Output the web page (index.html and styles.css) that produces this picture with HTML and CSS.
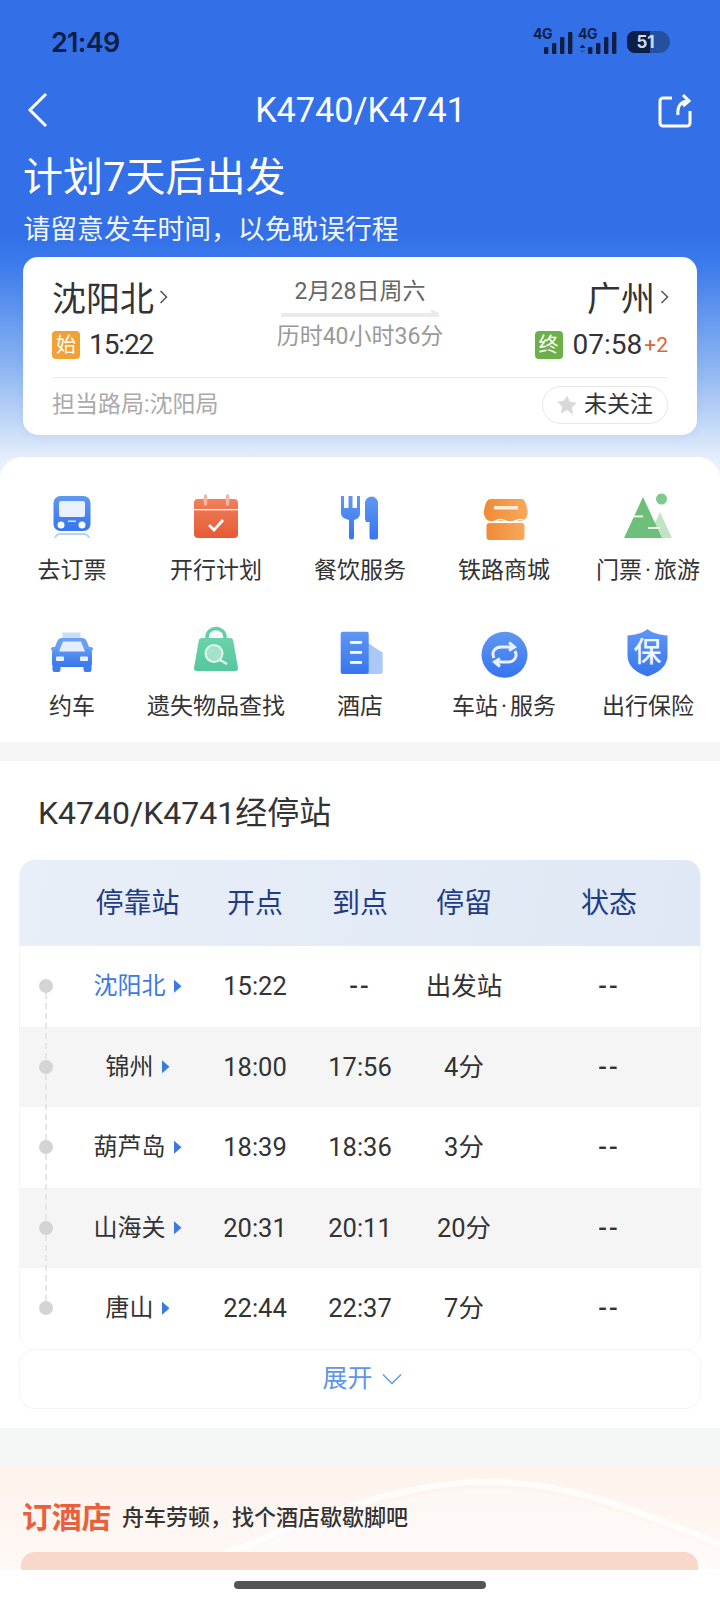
FILE: index.html
```html
<!DOCTYPE html>
<html lang="zh-CN">
<head>
<meta charset="utf-8">
<title>K4740/K4741</title>
<link rel="stylesheet" href="styles.css">
</head>
<body>
<svg class="defs" width="0" height="0" aria-hidden="true">
  <defs>
    <linearGradient id="gb" x1="0" y1="0" x2="0" y2="1"><stop offset="0" stop-color="#5f97f2"/><stop offset="1" stop-color="#3675ee"/></linearGradient>
    <linearGradient id="gr" x1="0" y1="0" x2="0" y2="1"><stop offset="0" stop-color="#f0805c"/><stop offset="1" stop-color="#e65a35"/></linearGradient>
    <linearGradient id="go" x1="0" y1="0" x2="1" y2="0"><stop offset="0" stop-color="#f08a36"/><stop offset="1" stop-color="#f7a95c"/></linearGradient>
    <linearGradient id="gg" x1="0" y1="0" x2="0" y2="1"><stop offset="0" stop-color="#6fbd75"/><stop offset="1" stop-color="#6cc07c"/></linearGradient>
    <linearGradient id="gm" x1="0" y1="0" x2="0" y2="1"><stop offset="0" stop-color="#6ad2ab"/><stop offset="1" stop-color="#55c79e"/></linearGradient>
  </defs>
</svg>
<main class="page">
  <div class="top">
    <div class="status">
      <span class="clock">21:49</span>
      <div class="status-icons">
        <svg class="signal" width="88" height="34" viewBox="-2 -6 88 34">
          <text class="net" x="0" y="11">4G</text>
          <rect x="11" y="19" width="4.400" height="7" rx="1"/><rect x="19" y="15" width="4.400" height="11" rx="1"/><rect x="27" y="9" width="4.400" height="17" rx="1"/><rect x="35" y="4" width="4.400" height="22" rx="1"/>
          <text class="net" x="45" y="11">4G</text>
          <path d="M46.500 20l3-3.500 3 3.500z"/><path class="down" d="M46.500 22h6l-3 3.500z"/>
          <rect x="55" y="19" width="4.400" height="7" rx="1"/><rect x="63" y="15" width="4.400" height="11" rx="1"/><rect x="71" y="9" width="4.400" height="17" rx="1"/><rect x="79" y="4" width="4.400" height="22" rx="1"/>
        </svg>
        <div class="battery"><div class="battery-fill"></div><span class="battery-num">51</span></div>
      </div>
    </div>
    <div class="nav">
      <svg class="nav-icon" width="32" height="36" viewBox="0 0 32 36"><path d="M20 2L4 18l16 16" fill="none" stroke="#fff" stroke-width="3"/></svg>
      <div class="nav-title">K4740/K4741</div>
      <svg class="nav-icon nav-share" width="34" height="36" viewBox="0 0 34 36"><path d="M14 6H5a3 3 0 0 0-3 3v22a3 3 0 0 0 3 3h24a3 3 0 0 0 3-3V19M20 23c-1-9 3-14 11-14M25 3l6 6-6 5" fill="none" stroke="#fff" stroke-width="3"/></svg>
    </div>
    <h1 class="headline">计划7天后出发</h1>
    <p class="subline">请留意发车时间，以免耽误行程</p>
    <section class="trip">
      <div class="trip-main">
        <div class="stop">
          <div class="stop-name">沈阳北<svg class="chev" width="10" height="18" viewBox="0 0 10 18"><path d="M1.500 3l6 6-6 6" fill="none" stroke="#555" stroke-width="1.500"/></svg></div>
          <div class="stop-time"><span class="tag tag-start">始</span><span class="time-narrow">15:22</span></div>
        </div>
        <div class="mid">
          <div class="mid-date">2月28日周六</div>
          <div class="mid-arrow"></div>
          <div class="mid-dur">历时40小时36分</div>
        </div>
        <div class="stop stop-end">
          <div class="stop-name">广州<svg class="chev chev-end" width="10" height="18" viewBox="0 0 10 18"><path d="M1.500 3l6 6-6 6" fill="none" stroke="#555" stroke-width="1.500"/></svg></div>
          <div class="stop-time"><span class="tag tag-end">终</span><span>07:58</span><span class="plus">+2</span></div>
        </div>
      </div>
      <div class="trip-foot">
        <span class="bureau">担当路局:沈阳局</span>
        <span class="follow"><svg width="20" height="20" viewBox="0 0 20 20"><path d="M10 .5l3 6.300 6.800.9-5 4.800 1.300 6.900L10 15.100l-6.100 3.300 1.300-6.900-5-4.800 6.800-.9z" fill="#d8d8d8"/></svg>未关注</span>
      </div>
    </section>
    <section class="services">
      <div class="svc">
        <svg class="ico" viewBox="0 0 48 48"><rect x="5.500" y="2" width="37" height="35" rx="7" fill="url(#gb)"/><rect x="11" y="7" width="26" height="16" rx="2" fill="#e9f1fd"/><circle cx="13" cy="31" r="3.500" fill="#fff"/><circle cx="34" cy="31" r="3.500" fill="#fff"/><rect x="20" y="26.500" width="8" height="1.500" fill="#cfe0fa"/><path d="M7 44c1-3 3-4 5-4h24c2 0 4 1 5 4" fill="none" stroke="#b8d1f8" stroke-width="2"/></svg>
        <span>去订票</span>
      </div>
      <div class="svc">
        <svg class="ico" viewBox="0 0 48 48"><rect x="2" y="5" width="44" height="39" rx="4" fill="url(#gr)"/><rect x="2" y="15" width="44" height="1.300" fill="#fff"/><path d="M13.500 2v8M35.500 2v8" stroke="#f5b7a2" stroke-width="3.500" stroke-linecap="round"/><path d="M17 31l5 5 9-10" fill="none" stroke="#fff" stroke-width="2.800"/></svg>
        <span>开行计划</span>
      </div>
      <div class="svc">
        <svg class="ico" viewBox="0 0 48 48"><path d="M5 2h3v12h4.500V2h4v12H21V2h3v17c0 4-2.500 6-6 7v17a2.500 2.500 0 0 1-5 0V26c-4-1-8-3-8-7z" fill="url(#gb)"/><path d="M29 9a6.500 6.500 0 0 1 13 0v34a2.500 2.500 0 0 1-2.500 2.500h-3.500a2.500 2.500 0 0 1-2.500-2.500V28H30l-1-3z" fill="url(#gb)"/></svg>
        <span>餐饮服务</span>
      </div>
      <div class="svc">
        <svg class="ico" viewBox="0 0 48 48"><path d="M11 5h30c3 0 4 2 5 5l1.500 6c1 5-2 11-6 11H10c-4 0-7-6-6-11l1.500-6c1-3 2.500-5 5.500-5z" fill="url(#go)"/><rect x="6.500" y="29" width="38" height="17" rx="3" fill="url(#go)"/><rect x="14" y="12" width="24" height="3.500" fill="#fbeadb"/><path d="M6 27q4.800 3 9.700 0t9.700 0 9.700 0 9.700 0" fill="none" stroke="#fff" stroke-width="1.500"/></svg>
        <span>铁路商城</span>
      </div>
      <div class="svc">
        <svg class="ico" viewBox="0 0 48 48"><circle cx="37.500" cy="5" r="5.500" fill="#80c98d"/><path d="M36 18l12 26H24z" fill="#c2e4c3"/><path d="M19 3l19 41H0z" fill="url(#gg)"/><rect x="8" y="21.500" width="11" height="1.800" fill="#fff"/><rect x="24" y="33" width="12" height="1.800" fill="#fff"/></svg>
        <span>门票<i class="sep">·</i>旅游</span>
      </div>
      <div class="svc svc-low">
        <svg class="ico" viewBox="0 0 48 48"><rect x="14.500" y="5.500" width="18" height="6" fill="#c8dbf9"/><path d="M14 11h20a5 5 0 0 1 4.600 3l3.400 8H6l3.400-8A5 5 0 0 1 14 11z" fill="#6aa0f3"/><rect x="3" y="20" width="42" height="4" rx="2" fill="#6aa0f3"/><rect x="4" y="22" width="40" height="18" rx="4" fill="url(#gb)"/><rect x="4.500" y="36" width="8" height="9" rx="2" fill="#3f7dee"/><rect x="35.500" y="36" width="8" height="9" rx="2" fill="#3f7dee"/><path d="M15 14.500h18l4 10H11z" fill="#e5ecfb"/><rect x="8" y="29.500" width="8" height="4.500" rx="1" fill="#eaf1fd"/><rect x="32" y="29.500" width="8" height="4.500" rx="1" fill="#eaf1fd"/></svg>
        <span>约车</span>
      </div>
      <div class="svc svc-low">
        <svg class="ico" viewBox="0 0 48 48"><path d="M15 13V10a9 8.500 0 0 1 18 0v3" fill="none" stroke="#62cfa6" stroke-width="3.500"/><path d="M10 11h28c2 0 3 1 3.300 3L46 41c.2 2-1 3-3 3H5c-2 0-3.200-1-3-3l4.700-27c.3-2 1.300-3 3.300-3z" fill="url(#gm)"/><circle cx="22" cy="26.500" r="8.500" fill="#a5e2cb" stroke="#e1f6ee" stroke-width="2"/><path d="M28 33l7 4" stroke="#e1f6ee" stroke-width="2.500"/></svg>
        <span>遗失物品查找</span>
      </div>
      <div class="svc svc-low">
        <svg class="ico" viewBox="0 0 48 48"><path d="M32 16l12 8a3 3 0 0 1 2.700 3v17a3 3 0 0 1-3 3H32z" fill="#aac9f6"/><rect x="4.700" y="4.700" width="28" height="42.300" rx="2" fill="url(#gb)"/><rect x="14" y="14" width="12" height="2.800" fill="#fff"/><rect x="14" y="24" width="12" height="2.800" fill="#fff"/><rect x="14" y="34" width="12" height="2.800" fill="#fff"/></svg>
        <span>酒店</span>
      </div>
      <div class="svc svc-low">
        <svg class="ico" viewBox="0 0 48 48"><circle cx="24.500" cy="27.700" r="23" fill="url(#gb)"/><path d="M14 31c-3-6 1-11 7-11h13M29 15.500l5.500 4.500-5.500 3.500M35 24c3 6-1 11-7 11H16M20 39.500L14.500 35l5.500-3.500" fill="none" stroke="#e9f1fd" stroke-width="3"/></svg>
        <span>车站<i class="sep">·</i>服务</span>
      </div>
      <div class="svc svc-low">
        <svg class="ico" viewBox="0 0 48 48"><path d="M23.500 2c5 4 12 6 20 6.500v20c0 10-8 17-20 21-12-4-20-11-20-21v-20c8-.5 15-2.500 20-6.500z" fill="url(#gb)"/><text class="shield-text" x="23.500" y="35" text-anchor="middle">保</text></svg>
        <span>出行保险</span>
      </div>
    </section>
  </div>

  <section class="stops">
    <h2 class="stops-title">K4740/K4741经停站</h2>
    <div class="table">
      <div class="thead">
        <span></span><span>停靠站</span><span>开点</span><span>到点</span><span>停留</span><span>状态</span>
      </div>
      <div class="tr"><span class="dot"></span><span class="st st-first">沈阳北<i class="tri"></i></span><span>15:22</span><span class="dash">--</span><span>出发站</span><span class="dash">--</span></div>
      <div class="tr alt"><span class="dot"></span><span class="st">锦州<i class="tri"></i></span><span>18:00</span><span>17:56</span><span>4分</span><span class="dash">--</span></div>
      <div class="tr"><span class="dot"></span><span class="st">葫芦岛<i class="tri"></i></span><span>18:39</span><span>18:36</span><span>3分</span><span class="dash">--</span></div>
      <div class="tr alt"><span class="dot"></span><span class="st">山海关<i class="tri"></i></span><span>20:31</span><span>20:11</span><span>20分</span><span class="dash">--</span></div>
      <div class="tr"><span class="dot dot-last"></span><span class="st">唐山<i class="tri"></i></span><span>22:44</span><span>22:37</span><span>7分</span><span class="dash">--</span></div>
    </div>
    <div class="expand">展开<svg width="20" height="12" viewBox="0 0 20 12"><path d="M1 1.500l9 9 9-9" fill="none" stroke="#5b95ec" stroke-width="1.400"/></svg></div>
  </section>

  <section class="hotel">
    <svg class="hotel-wave" width="720" height="110" viewBox="0 0 720 110" preserveAspectRatio="none"><path d="M170 110C300 60 400 12 500 17c90 4 160 40 220 62" fill="none" stroke="#fff" stroke-width="6" opacity=".8"/><path d="M170 110C300 65 400 20 500 24c90 4 160 40 220 62v24z" fill="#fff" opacity=".35"/></svg>
    <div class="hotel-head"><span class="hotel-title">订酒店</span><span class="hotel-sub">舟车劳顿，找个酒店歇歇脚吧</span></div>
    <div class="hotel-card"></div>
  </section>
  <div class="home"><span class="home-bar"></span></div>
</main>
</body>
</html>
```

FILE: styles.css
```css
* { box-sizing: border-box; }
html, body { margin: 0; padding: 0; }
body {
  width: 720px;
  height: 1600px;
  overflow: hidden;
  background: #f5f6f6;
  font-family: Roboto, "Noto Sans CJK SC", sans-serif;
  color: #333;
}
.defs { position: absolute; }
.page { position: relative; width: 720px; height: 1600px; overflow: hidden; }

.top {
  background: linear-gradient(#3370e8 0, #3370e8 235px, #3b7aec 262px, #86b0f1 360px, #c9dcf8 430px, #e8f0fc 462px, #fff 500px);
}
.status { height: 84px; padding: 0 50px 0 51px; display: flex; align-items: center; justify-content: space-between; }
.clock { font-family: Inter, sans-serif; font-size: 27px; font-weight: 600; letter-spacing: -.7px; color: #0e1f47; }
.status-icons { display: flex; align-items: center; gap: 8px; margin-top: -1px; }
.signal { fill: #0e1f47; display: block; margin-top: -5px; }
.signal .down { fill: #2a5bc0; }
.net { font-family: Inter, sans-serif; font-size: 14px; font-weight: 700; letter-spacing: -.5px; }
.battery { position: relative; width: 43px; height: 22px; border-radius: 8px 11px 11px 8px; background: #24509f; overflow: hidden; display: flex; align-items: center; justify-content: center; }
.battery-fill { position: absolute; left: 0; top: 0; bottom: 0; width: 23px; background: #0e1f47; }
.battery-num { position: relative; font-family: Inter, sans-serif; font-size: 17px; font-weight: 700; color: #cfdcf5; margin-right: 6px; }

.nav { height: 52px; padding: 0 28px 0 26px; display: grid; grid-template-columns: 34px 1fr 34px; align-items: center; }
.nav-icon { display: block; }
.nav-title { padding-left: 3px; font-size: 34.200px; color: #fff; text-align: center; }

.headline { margin: 18px 0 0; padding-left: 23px; font-size: 40px; line-height: 48px; font-weight: 400; color: #fff; }
.subline { margin: 10px 0 0; padding-left: 23.500px; font-size: 26.800px; line-height: 36px; font-weight: 400; color: #f1f5fd; }

.trip { margin: 9px 23px 0; height: 178px; padding: 19px 29px 0; border-radius: 15px; background: #fff; box-shadow: 0 2px 8px rgba(60, 110, 200, .08); }
.trip-main { display: grid; grid-template-columns: 1fr auto 1fr; height: 102px; border-bottom: 1px solid #ececec; }
.stop-name { margin-top: 1px; display: flex; align-items: center; gap: 5px; font-size: 34px; line-height: 44px; color: #333; }
.chev { display: block; margin-top: -4px; }
.chev-end { margin-right: -2px; }
.stop-time { margin-top: 10px; display: flex; align-items: center; gap: 10px; font-size: 28px; line-height: 28px; color: #333; }
.time-narrow { margin-left: -1px; letter-spacing: -1.100px; }
.stop-end .stop-name, .stop-end .stop-time { justify-content: flex-end; }
.tag { width: 28px; height: 28px; border-radius: 4px; display: flex; align-items: center; justify-content: center; font-size: 20px; line-height: 28px; color: #fff; }
.tag-start { background: #f2a136; }
.tag-end { background: #6bb04a; }
.plus { margin-left: -8px; font-size: 21px; color: #d9653c; }
.mid { width: 172px; display: flex; flex-direction: column; align-items: center; margin-top: -1px; }
.mid-date { font-size: 23px; line-height: 34px; color: #666; }
.mid-arrow { position: relative; width: 158px; height: 4px; margin-top: 4px; background: #ebebeb; }
.mid-arrow::after { content: ""; position: absolute; right: 0; top: -4px; border-left: 8px solid #ebebeb; border-top: 4px solid transparent; border-bottom: 4px solid #ebebeb; }
.mid-dur { margin-top: 3px; font-size: 23px; line-height: 34px; color: #999; white-space: nowrap; }
.trip-foot { height: 56px; padding-bottom: 2px; display: flex; align-items: center; justify-content: space-between; }
.bureau { font-size: 23px; line-height: 32px; color: #aaa; }
.follow { width: 126px; height: 38px; border: 1px solid #e6e6e6; border-radius: 19px; display: flex; align-items: center; justify-content: center; gap: 7px; font-size: 23px; line-height: 32px; color: #333; }

.services { margin-top: 22px; padding: 37px 0 19px; background: #fff; border-radius: 22px 22px 0 0; display: grid; grid-template-columns: repeat(5, 144px); row-gap: 40px; }
.svc { display: flex; flex-direction: column; align-items: center; gap: 13px; font-size: 23px; line-height: 32px; color: #333; white-space: nowrap; }
.svc-low { gap: 16px; }
.sep { font-style: normal; margin: 0 3px; }
.ico { display: block; width: 48px; height: 48px; overflow: visible; }
.shield-text { font-family: "Noto Sans CJK SC", sans-serif; font-size: 28px; font-weight: 500; fill: #f0f5fe; }

.stops { margin-top: 19px; height: 667px; padding: 29px 19px 0; background: #fff; }
.stops-title { margin: 0 0 0 19px; font-size: 32px; line-height: 46px; font-weight: 400; color: #333; }
.table { margin-top: 24px; border-radius: 15px; border-left: 1px solid #f4f4f4; border-right: 1px solid #f4f4f4; overflow: hidden; }
.thead, .tr { display: grid; grid-template-columns: 55px 127px 108px 102px 106px 1fr; align-items: center; text-align: center; margin: 0 -1px; line-height: 32px; }
.thead { height: 86px; padding-top: 2px; font-size: 28px; color: #1f3c84; background: linear-gradient(100deg, #e9eff8, #dfe8f5); }
.tr { height: 80.500px; font-size: 25.500px; color: #333; }
.alt { background: #f5f5f5; }
.st { display: flex; align-items: center; justify-content: center; gap: 8px; font-size: 24px; }
.st-first { color: #3b7ae0; }
.tri { width: 8px; height: 14px; background: #3b7ae0; clip-path: polygon(0 0, 100% 50%, 0 100%); }
.dash { font-weight: 500; letter-spacing: 2px; }
.dot { position: relative; justify-self: start; margin-left: 20px; width: 14px; height: 14px; border-radius: 50%; background: #d4d4d4; }
.dot::after { content: ""; position: absolute; left: 6px; top: 14px; height: 66px; border-left: 2px dashed #e6e6e6; }
.dot-last::after { display: none; }
.expand { height: 60px; border: 1px solid #f5f5f5; border-radius: 15px; display: flex; align-items: center; justify-content: center; gap: 9px; font-size: 25px; line-height: 32px; color: #5b95ec; padding-left: 4px; }

.hotel { position: relative; margin-top: 37px; height: 135px; background: linear-gradient(#fdf3ec, #fff8f5 70%, #fff); overflow: hidden; }
.hotel-wave { position: absolute; left: 0; top: 0; }
.hotel-head { position: relative; padding: 12px 0 0 22px; height: 87px; display: flex; align-items: center; gap: 11px; }
.hotel-title { font-size: 30px; font-weight: 700; color: #e8603c; letter-spacing: -.3px; }
.hotel-sub { font-size: 22px; font-weight: 500; color: #333; }
.hotel-card { position: relative; height: 30px; margin: 0 22px 0 21px; border-radius: 14px 14px 0 0; background: #f8d8c8; }
.home { position: absolute; left: 0; right: 0; bottom: 0; height: 30px; background: #fff; display: flex; justify-content: center; padding-top: 11px; }
.home-bar { width: 252px; height: 8px; border-radius: 4px; background: #555; }
```
